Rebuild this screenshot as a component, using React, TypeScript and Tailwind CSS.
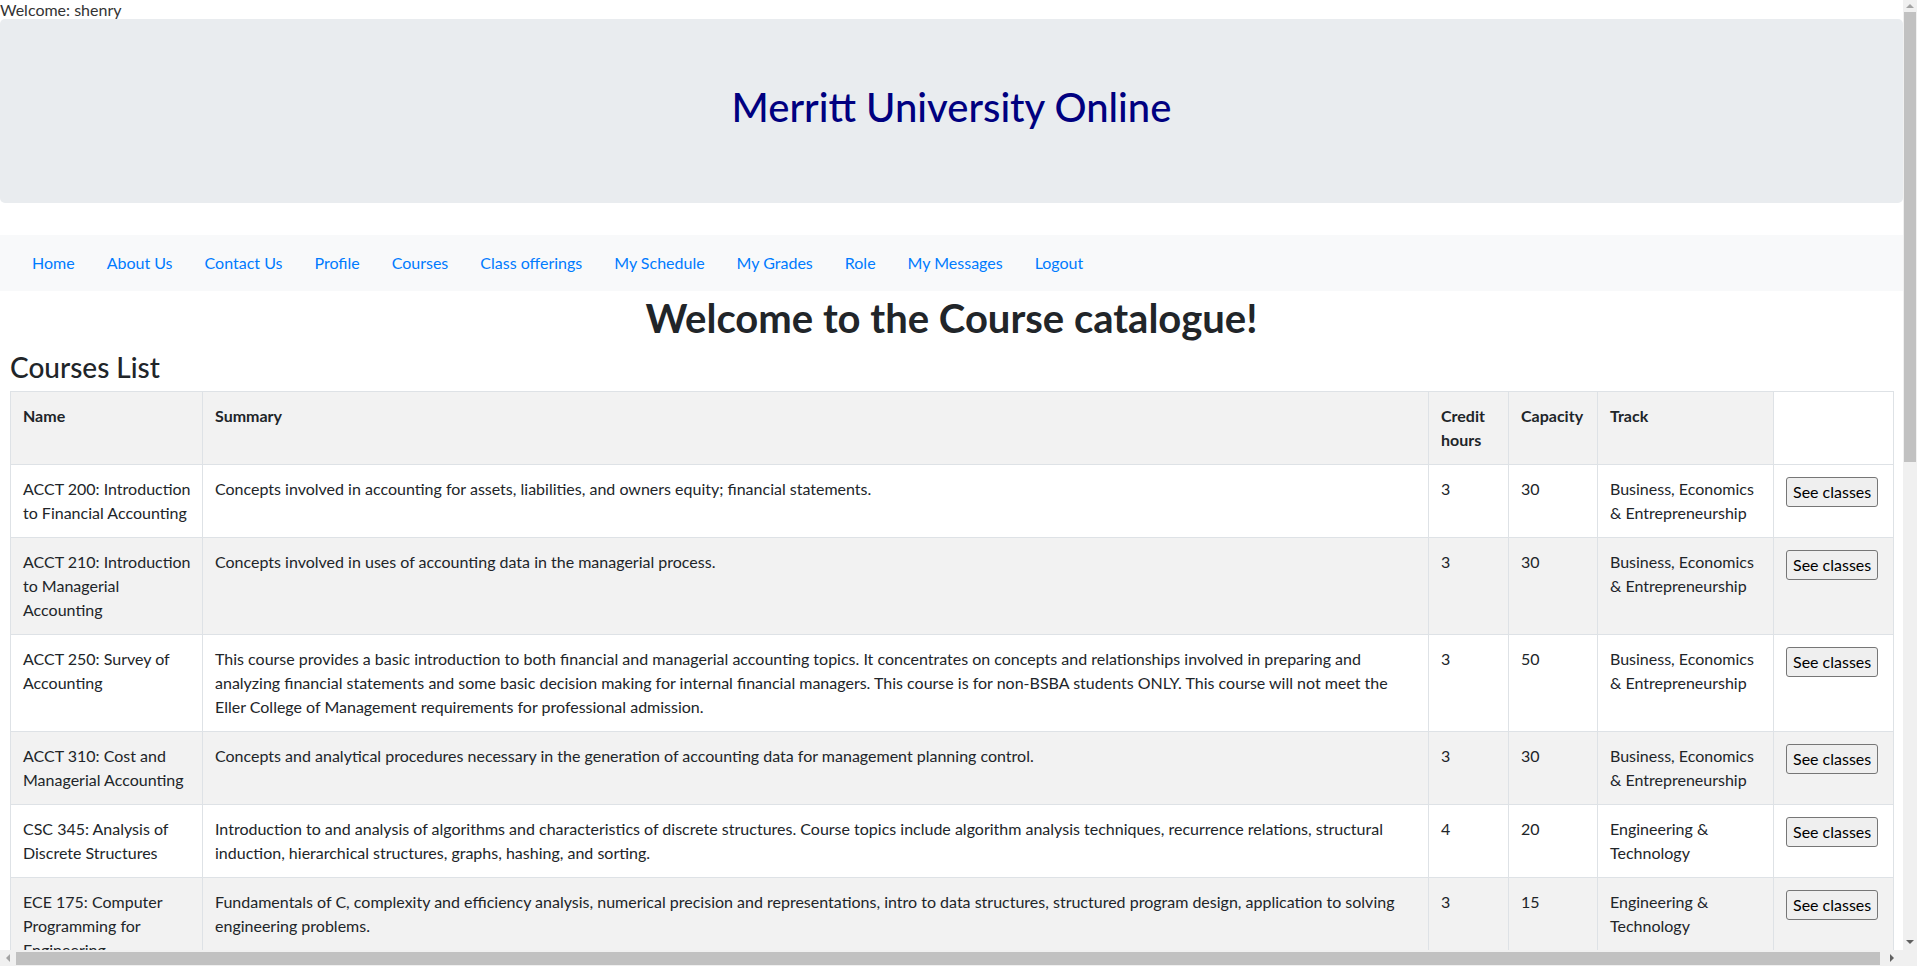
import React from 'react';

type Course = {
  name: string;
  summary: string;
  credits: number;
  capacity: number;
  track: string;
};

const courses: Course[] = [
  {
    name: 'ACCT 200: Introduction to Financial Accounting',
    summary: 'Concepts involved in accounting for assets, liabilities, and owners equity; financial statements.',
    credits: 3,
    capacity: 30,
    track: 'Business, Economics & Entrepreneurship',
  },
  {
    name: 'ACCT 210: Introduction to Managerial Accounting',
    summary: 'Concepts involved in uses of accounting data in the managerial process.',
    credits: 3,
    capacity: 30,
    track: 'Business, Economics & Entrepreneurship',
  },
  {
    name: 'ACCT 250: Survey of Accounting',
    summary:
      'This course provides a basic introduction to both financial and managerial accounting topics. It concentrates on concepts and relationships involved in preparing and analyzing financial statements and some basic decision making for internal financial managers. This course is for non-BSBA students ONLY. This course will not meet the Eller College of Management requirements for professional admission.',
    credits: 3,
    capacity: 50,
    track: 'Business, Economics & Entrepreneurship',
  },
  {
    name: 'ACCT 310: Cost and Managerial Accounting',
    summary: 'Concepts and analytical procedures necessary in the generation of accounting data for management planning control.',
    credits: 3,
    capacity: 30,
    track: 'Business, Economics & Entrepreneurship',
  },
  {
    name: 'CSC 345: Analysis of Discrete Structures',
    summary:
      'Introduction to and analysis of algorithms and characteristics of discrete structures. Course topics include algorithm analysis techniques, recurrence relations, structural induction, hierarchical structures, graphs, hashing, and sorting.',
    credits: 4,
    capacity: 20,
    track: 'Engineering & Technology',
  },
  {
    name: 'ECE 175: Computer Programming for Engineering',
    summary:
      'Fundamentals of C, complexity and efficiency analysis, numerical precision and representations, intro to data structures, structured program design, application to solving engineering problems.',
    credits: 3,
    capacity: 15,
    track: 'Engineering & Technology',
  },
];

const navLinks = [
  'Home',
  'About Us',
  'Contact Us',
  'Profile',
  'Courses',
  'Class offerings',
  'My Schedule',
  'My Grades',
  'Role',
  'My Messages',
  'Logout',
];

const VScrollbar: React.FC = () => (
  <div className="w-[14px] h-[950px] bg-[#f0f0f0] flex flex-col items-center">
    <div className="h-[12px] flex items-center justify-center">
      <svg width="8" height="4" viewBox="0 0 8 4">
        <path d="M0 4L4 0L8 4Z" fill="#a3a3a3" />
      </svg>
    </div>
    <div className="w-[12px] h-[450px] bg-[#c1c1c1]" />
    <div className="flex-1" />
    <div className="h-[16px] flex items-center justify-center">
      <svg width="8" height="4" viewBox="0 0 8 4">
        <path d="M0 0L4 4L8 0Z" fill="#606060" />
      </svg>
    </div>
  </div>
);

const HScrollbar: React.FC = () => (
  <div className="w-[1903px] h-[16px] bg-[#f0f0f0] flex items-center">
    <div className="w-[16px] flex items-center justify-center">
      <svg width="4" height="8" viewBox="0 0 4 8">
        <path d="M4 0L0 4L4 8Z" fill="#a3a3a3" />
      </svg>
    </div>
    <div className="w-[1864px] h-[13px] bg-[#c1c1c1]" />
    <div className="flex-1 flex items-center justify-center">
      <svg width="4" height="8" viewBox="0 0 4 8">
        <path d="M0 0L4 4L0 8Z" fill="#606060" />
      </svg>
    </div>
  </div>
);

const App: React.FC = () => {
  const cell = 'border border-[#dee2e6] p-3 align-top text-left';

  return (
    <div className="w-[1917px] h-[966px] flex flex-col overflow-hidden bg-white text-[#212529] font-['Lato','Liberation_Sans',sans-serif]">
      <div className="flex h-[950px]">
        <div className="w-[1903px] h-[950px] overflow-hidden">
          <div className="h-[19px] text-[16px] leading-[19px] text-[#333]">Welcome: shenry</div>

          <div className="bg-[#e9ecef] rounded-[5px] h-[184px] pt-[64px] text-center">
            <h1 className="text-[40px] leading-[48px] font-medium text-[#000080]">Merritt University Online</h1>
          </div>

          <nav className="mt-[32px] bg-[#f8f9fa] h-[56px] px-4 flex items-center">
            {navLinks.map((link) => (
              <a key={link} href="#" className="px-4 text-[16px] leading-6 text-[#007bff]">
                {link}
              </a>
            ))}
          </nav>

          <h1 className="pt-[3px] text-center text-[40px] leading-[48px] font-bold mb-2">Welcome to the Course catalogue!</h1>
          <h3 className="px-[10px] text-[28px] leading-[34px] font-medium mb-[7px]">Courses List</h3>

          <div className="px-[10px]">
            <table className="table-fixed border-collapse w-[1883px] text-[16px] leading-6">
              <colgroup>
                <col className="w-[192px]" />
                <col className="w-[1226px]" />
                <col className="w-[80px]" />
                <col className="w-[89px]" />
                <col className="w-[176px]" />
                <col className="w-[120px]" />
              </colgroup>
              <thead>
                <tr>
                  <th className={`${cell} bg-[#f2f2f2] font-bold`}>Name</th>
                  <th className={`${cell} bg-[#f2f2f2] font-bold`}>Summary</th>
                  <th className={`${cell} bg-[#f2f2f2] font-bold`}>Credit hours</th>
                  <th className={`${cell} bg-[#f2f2f2] font-bold`}>Capacity</th>
                  <th className={`${cell} bg-[#f2f2f2] font-bold`}>Track</th>
                  <th className={`${cell} bg-white`}></th>
                </tr>
              </thead>
              <tbody>
                {courses.map((c, i) => (
                  <tr key={c.name} className={i % 2 === 1 ? 'bg-[#f2f2f2]' : 'bg-white'}>
                    <td className={`${cell} pr-[8px]`}>{c.name}</td>
                    <td className={cell}>{c.summary}</td>
                    <td className={cell}>{c.credits}</td>
                    <td className={cell}>{c.capacity}</td>
                    <td className={cell}>{c.track}</td>
                    <td className={cell}>
                      <button className="h-[30px] px-[6px] border border-[#767676] rounded-[3px] bg-[#efefef] text-[16px] leading-6 text-black whitespace-nowrap">
                        See classes
                      </button>
                    </td>
                  </tr>
                ))}
              </tbody>
            </table>
          </div>
        </div>
        <VScrollbar />
      </div>
      <div className="flex h-[16px]">
        <HScrollbar />
        <div className="w-[14px] bg-[#f0f0f0]" />
      </div>
    </div>
  );
};

export default App;
